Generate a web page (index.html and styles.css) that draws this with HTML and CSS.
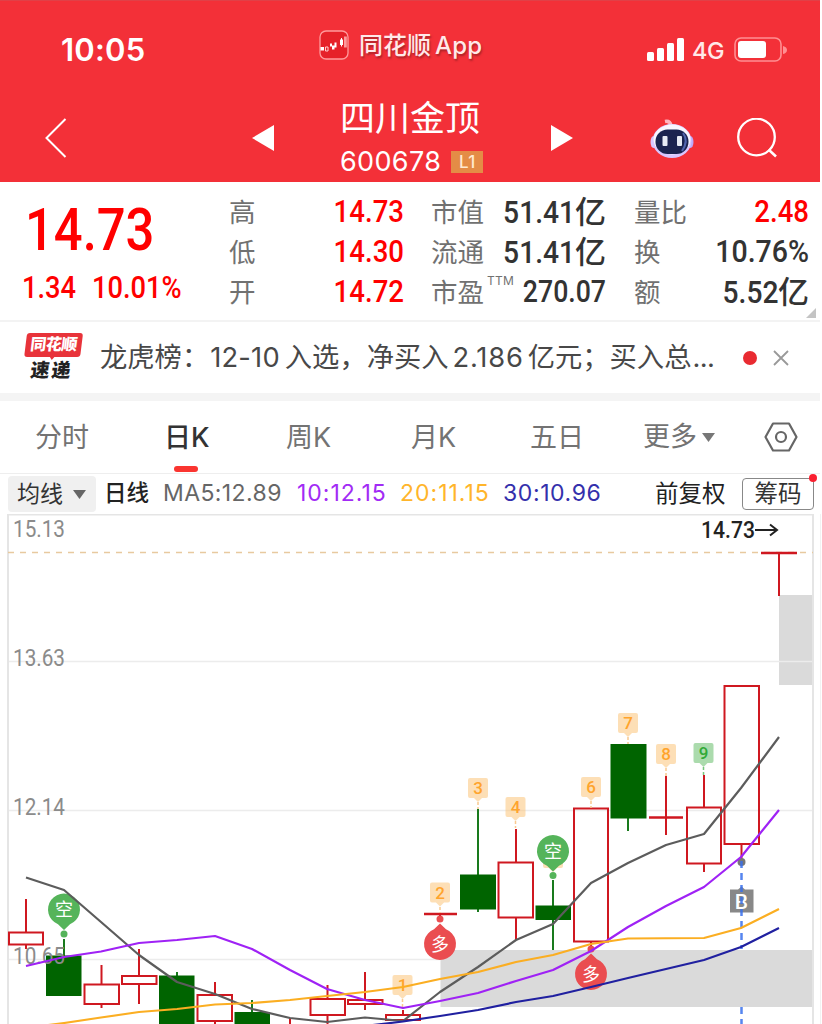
FILE: index.html
```html
<!DOCTYPE html>
<html lang="zh-CN">
<head>
<meta charset="utf-8">
<title>四川金顶 600678</title>
<link rel="stylesheet" href="styles.css">
</head>
<body>
<main class="screen">
  <header class="header">
    <div class="status">
      <span class="clock">10:05</span>
      <div class="brand">
        <svg class="brand-icon" viewBox="0 0 30 30"><rect x="1" y="1" width="28" height="28" rx="6" fill="#e62129" stroke="#ff9a9c" stroke-width="1.3"/><path d="M1.500 17h3.500v3.500H1.500zM11 13.500h2v3h-2zM13 15.500h2.500v4H13zM15.500 12.500h2v5h-2zM21 9.500h3v5.500h-3z" fill="#fff"/><path d="M6.500 17h2.500v4H6.500z" fill="none" stroke="#ffd0d0"/><path d="M25 6.500h2.800v11H25z" fill="#ff9a9c"/><path d="M22.500 8v8.500" stroke="#fff"/></svg>
        <span>同花顺<i class="brand-latin">App</i></span>
      </div>
      <div class="phone">
        <svg class="signal" viewBox="0 0 38 24"><g fill="#fff"><rect x="0" y="14" width="7" height="9" rx="1.5"/><rect x="10" y="10" width="7" height="13" rx="1.5"/><rect x="20" y="5" width="7" height="18" rx="1.5"/><rect x="30" y="0" width="7" height="23" rx="1.5"/></g></svg>
        <span class="net">4G</span>
        <svg class="battery" viewBox="0 0 54 26"><rect x="1" y="1" width="46" height="23" rx="6" fill="none" stroke="#ff8f92" stroke-width="1.6"/><rect x="4" y="4" width="28" height="17" rx="3" fill="#fff"/><path d="M49 9q4 1 4 4t-4 4z" fill="#ff8f92"/></svg>
      </div>
    </div>
    <nav class="nav">
      <svg class="back" viewBox="0 0 22 40"><path d="M20.500 1L1.500 20l19 19" fill="none" stroke="#fff" stroke-width="2"/></svg>
      <svg class="prev" viewBox="0 0 22 26"><path d="M22 0v26L0 13z" fill="#fff"/></svg>
      <div class="title">
        <h1 class="name">四川金顶</h1>
        <div class="code"><span>600678</span><b class="level">L1</b></div>
      </div>
      <svg class="next" viewBox="0 0 22 26"><path d="M0 0v26l22-13z" fill="#fff"/></svg>
      <svg class="robot" viewBox="0 0 44 42"><path d="M15 2.500q5-1 6 4" fill="none" stroke="#ffb4c0" stroke-width="3.500"/><ellipse cx="3.500" cy="23" rx="3" ry="6" fill="#d6c8ff"/><ellipse cx="40.500" cy="23" rx="3" ry="6" fill="#bda9fa"/><ellipse cx="22" cy="22" rx="19.500" ry="17" fill="#d9c6ff"/><ellipse cx="22" cy="20.500" rx="18.500" ry="15" fill="#f8f6ff"/><rect x="5.500" y="10.500" width="33" height="24.500" rx="12" fill="#1b2450"/><path d="M33 14q6 8-1 18" stroke="#5165ad" stroke-width="2" fill="none"/><rect x="12.500" y="17" width="5" height="10" rx="1" fill="#e7ecf5"/><rect x="27" y="17" width="5" height="10" rx="1" fill="#e7ecf5"/></svg>
      <svg class="search" viewBox="0 0 42 42"><circle cx="19.500" cy="19" r="18.300" fill="none" stroke="#fff" stroke-width="2.300"/><path d="M31.500 31.500l7.500 7" stroke="#fff" stroke-width="2.500"/></svg>
    </nav>
  </header>

  <section class="quote">
    <div class="price">
      <div class="last num">14.73</div>
      <div class="change"><span class="num">1.34</span><span class="num">10.01%</span></div>
    </div>
    <dl class="stats">
      <dt>高</dt><dd class="up num">14.73</dd>
      <dt>市值</dt><dd><span class="num cap">51.41</span><span class="unit">亿</span></dd>
      <dt>量比</dt><dd class="up num">2.48</dd>
      <dt>低</dt><dd class="up num">14.30</dd>
      <dt>流通</dt><dd><span class="num cap">51.41</span><span class="unit">亿</span></dd>
      <dt>换</dt><dd class="num turnover">10.76%</dd>
      <dt>开</dt><dd class="up num">14.72</dd>
      <dt class="pe">市盈<sup>TTM</sup></dt><dd class="num ratio">270.07</dd>
      <dt>额</dt><dd><span class="num cap">5.52</span><span class="unit">亿</span></dd>
    </dl>
    <svg class="corner" viewBox="0 0 10 10"><path d="M10 0v10H0z" fill="#c4c4c4"/></svg>
  </section>

  <section class="news">
    <div class="express"><span class="express-top">同花顺</span><span class="express-bottom">速递</span></div>
    <p class="headline">龙虎榜：<i class="date">12-10</i>入选，净买入<i class="amount">2.186</i>亿元；买入总<em>...</em></p>
    <span class="unread"></span>
    <svg class="close" viewBox="0 0 16 16"><path d="M1 1l14 14M15 1L1 15" stroke="#999" stroke-width="1.800"/></svg>
  </section>

  <nav class="tabs">
    <span>分时</span>
    <span class="active">日<i>K</i></span>
    <span>周<i>K</i></span>
    <span>月<i>K</i></span>
    <span>五日</span>
    <span class="more">更多<svg class="caret" viewBox="0 0 13 9"><path d="M0 0h13L6.500 9z" fill="#777"/></svg></span>
    <svg class="settings" viewBox="0 0 34 30"><path d="M9 1.500h16L32.500 15 25 28.500H9L1.500 15z" fill="none" stroke="#666" stroke-width="2.200" stroke-linejoin="round"/><circle cx="17" cy="15" r="5" fill="none" stroke="#666" stroke-width="2.200"/></svg>
  </nav>

  <div class="averages">
    <button class="picker">均线<svg class="caret" viewBox="0 0 13 9"><path d="M0 0h13L6.500 9z" fill="#666"/></svg></button>
    <span class="period">日线</span>
    <span class="ma ma5">MA5:12.89</span>
    <span class="ma ma10">10:12.15</span>
    <span class="ma ma20">20:11.15</span>
    <span class="ma ma30">30:10.96</span>
    <span class="adjust">前复权</span>
    <button class="chips">筹码</button>
  </div>

  <svg class="chart" viewBox="0 514 822 510">
    <defs>
      <path id="tag" d="M-8 0H8Q10 0 10 2V18Q10 20 8 20H4L0 24L-4 20H-8Q-10 20-10 18V2Q-10 0-8 0Z"/>
      <path id="pin" d="M-6 14.800A16 16 0 1 1 6 14.800L0 20.500Z"/>
    </defs>
    <g fill="#dadada"><path d="M440.500 950H813v57H440.500zM779 595h34v90h-34z"/></g>
    <path d="M8 661.500H813M8 810.500H813M8 959.500H440" stroke="#ececec" stroke-width="1.500"/>
    <path d="M8 1024V514.500H813V1024" fill="none" stroke="#e5e5e5" stroke-width="2"/>
    <path d="M820.500 514V1024" stroke="#f2f2f2"/>
    <path d="M8 552.500H813" stroke="#e8c99f" stroke-width="1.500" stroke-dasharray="6 6"/>

    <g fill="none" stroke="#cf1820" stroke-width="2">
      <path d="M26 899v33M26 945v4M101.500 965v19M101.500 1005v3M139 949v27M139 985v19M215 982v13M215 1021v4M290 1018v8M327.500 985v14M327.500 1016v9M365 972v27M365 1004v6M403 1010v5M440 914v4M516 829v33M516 918v22M591 942v6M666 776v59M704 775v32M704 864v8M741.500 844v16M779 553v43"/>
      <path d="M9 932.500H43V944.500H9zM84.500 984.500H119V1004H84.500zM122 976H156.500V984H122zM197.500 995H232V1021H197.500zM310.500 999H345V1015H310.500zM348 1000H382.500V1004H348zM386 1015H420V1020H386zM498.500 862.500H533V917.500H498.500zM574 808.500H608V941.500H574zM687 807.500H721V863.500H687zM724.500 686H759V844H724.500z"/>
      <path d="M424 914H457M649 817.500H683M761 553H797" stroke-width="2.500"/>
    </g>
    <path d="M64 939V956M177 972V976M252 1000V1013M478 809V912M553 880V950M628 744V831" stroke="#197a1d" stroke-width="2"/>
    <path d="M46 955.500H81.500V996H46zM159 975.500H194.500V1026H159zM234.500 1012H270V1026H234.500zM460 874.500H496V909.500H460zM535.500 905.500H571V920H535.500zM610.500 744H646.500V818.500H610.500z" fill="#006400"/>

    <circle cx="741.500" cy="862" r="4" fill="#777"/>
    <path d="M738 889.500l3.500-3 3.500 3h8.500v23H730v-23z" fill="#888"/>
    <text x="741.500" y="909" class="buy">B</text>
    <path d="M741.500 861V949M741.500 1007V1024" stroke="#3970ed" stroke-width="2.500" stroke-dasharray="7 5" opacity=".85"/>

    <g class="axis">
      <text x="13" y="537" textLength="52" lengthAdjust="spacingAndGlyphs">15.13</text>
      <text x="13" y="666" textLength="52" lengthAdjust="spacingAndGlyphs">13.63</text>
      <text x="13" y="815" textLength="52" lengthAdjust="spacingAndGlyphs">12.14</text>
      <text x="13" y="964" textLength="52" lengthAdjust="spacingAndGlyphs">10.65</text>
    </g>
    <text x="701" y="538" class="peak" textLength="54" lengthAdjust="spacingAndGlyphs">14.73</text>
    <path d="M755 530H776M770 524.500L777 530L770 535.500" fill="none" stroke="#222" stroke-width="2"/>

    <g fill="#fcc47a" fill-opacity=".55">
      <use href="#tag" x="402.500" y="975"/><use href="#tag" x="440" y="882.500"/><use href="#tag" x="478" y="778"/><use href="#tag" x="515.500" y="797"/><use href="#tag" x="553" y="848"/><use href="#tag" x="591" y="777"/><use href="#tag" x="628" y="713"/><use href="#tag" x="666" y="744"/>
      <use href="#tag" x="703.500" y="743" fill="#66be69"/>
    </g>
    <g fill="none" stroke="#f9c98f" stroke-width="1.500" stroke-dasharray="3 2">
      <path d="M402.500 999v10M440 907v6M478 802v7M515.500 821v7M591 801v7M628 737v7M666 768v8"/><path d="M703.500 767v8" stroke="#75c67b"/>
    </g>
    <g class="count"><text x="402.500" y="991">1</text><text x="440" y="898.500">2</text><text x="478" y="794">3</text><text x="515.500" y="813">4</text><text x="591" y="793">6</text><text x="628" y="729">7</text><text x="666" y="760">8</text><text x="703.500" y="759" class="count-nine">9</text></g>

    <g fill="#55b45a"><use href="#pin" x="64" y="909.500"/><circle cx="64" cy="934" r="3.500"/><use href="#pin" x="553" y="851"/><circle cx="553" cy="875.500" r="3.500"/></g>
    <g fill="#ea4d50"><use href="#pin" transform="translate(440 944) rotate(180)"/><circle cx="440" cy="919" r="3.500"/><use href="#pin" transform="translate(591 974) rotate(180)"/><circle cx="591" cy="949" r="3.500"/></g>
    <g class="mark"><text x="64" y="916">空</text><text x="553" y="857.500">空</text><text x="440" y="950.500">多</text><text x="591" y="980.500">多</text></g>

    <g fill="none" stroke-width="2.200" stroke-linejoin="round">
      <path stroke="#5c5c5c" d="M26 877.500L64 890L101 922L139 955L177 982L215 994L252 1009L290 1018L327 1022L365 1017.500L403 1021L440 992L478 967L516 940L553 924L591 883L628 863L666 845L704 834L741 788L779 737"/>
      <path stroke="#9f22f5" d="M26 966L64 957L101 951.500L139 943L177 940L215 936L252 949L290 970L327 989L365 1000L403 1008L440 1001L478 993L516 981L553 970L591 951L628 927L666 906L704 887L741 857L779 810"/>
      <path stroke="#fbae22" d="M26 1028L64 1023L101 1017.500L139 1012L177 1009L215 1004.500L252 1003L290 1000L327 996L365 992L403 987L440 979L478 972L516 962L553 955L591 944L628 938.500L704 938L741 928L779 909"/>
      <path stroke="#2020a0" d="M365 1026L403 1021.500L440 1016L478 1010L516 1002L553 996L591 987L628 978L666 969L704 960L741 947L779 928"/>
    </g>
  </svg>
</main>
</body>
</html>
```
FILE: styles.css
```css
* { box-sizing: border-box; }
body { margin: 0; background: #fff; overflow: hidden; font-family: Inter, "Noto Sans CJK SC", sans-serif; color: #333; }
i, em { font-style: normal; }
svg { display: block; flex: none; }
button { font: inherit; color: inherit; margin: 0; }
.screen { width: 822px; height: 1024px; overflow: hidden; }

.header { width: 820px; height: 182px; background: #f33038; color: #fff; border-top: 1px solid #e14047; }
.status { display: flex; height: 91px; }
.clock { width: 258px; padding: 30px 0 0 61px; font-size: 31px; line-height: 38px; font-weight: 600; letter-spacing: .2px; }
.brand { display: flex; width: 328px; padding: 27px 0 0 61px; gap: 10px; font-size: 24px; line-height: 36px; white-space: nowrap; text-shadow: 1px 2px 2px #7a1a1e99; color: #ffe9e9; font-weight: 500; }
.brand-icon { width: 30px; height: 30px; margin-top: 2px; }
.brand-latin { margin-left: 4px; letter-spacing: .2px; }
.phone { display: flex; padding: 37px 0 0 61px; }
.signal { width: 38px; height: 24px; }
.net { width: 41px; margin-left: 7px; font-size: 23.5px; line-height: 25px; color: #ffe9e9; font-weight: 500; letter-spacing: -.5px; }
.battery { width: 54px; height: 26px; margin-top: -1px; margin-left: 1px; }
.nav { display: flex; height: 90px; padding-left: 45px; }
.back { width: 22px; height: 40px; margin-top: 26px; }
.prev { width: 22px; height: 26px; margin: 33px 0 0 185px; }
.title { width: 211px; margin-left: 66px; }
.name { margin: 4px 0 0; font-size: 35px; line-height: 44px; font-weight: 400; white-space: nowrap; }
.code { display: flex; gap: 10px; align-items: center; margin-top: 5px; font-size: 27px; line-height: 34px; letter-spacing: .35px; }
.level { width: 32px; height: 22px; background: #e48c46; font-size: 17px; line-height: 22px; text-align: center; font-weight: 500; color: #ffe9d0; }
.next { width: 22px; height: 26px; margin-top: 33px; }
.robot { width: 44px; height: 42px; margin: 27px 0 0 77px; }
.search { width: 42px; height: 42px; margin: 26px 0 0 43px; }

.quote { display: flex; position: relative; width: 820px; height: 140px; border-bottom: 2px solid #f3f3f3; }
.num { font-family: Roboto, sans-serif; font-weight: 500; font-size: 31px; display: inline-block; transform: scaleX(.89); transform-origin: right; }
.price { width: 229px; color: #f00; white-space: nowrap; }
.last { margin: 11px 0 0 25px; font-size: 59px; line-height: 74px; transform: scaleX(.86); transform-origin: left; display: block; }
.change { display: flex; gap: 9px; padding-left: 22px; line-height: 41px; }
.change .num { transform: scaleX(.88); transform-origin: left; font-size: 31px; }
.stats { display: grid; grid-template-columns: 53px 149px 54px 149px 54px 121px; grid-auto-rows: 40px; margin: 10px 0 0; line-height: 40px; white-space: nowrap; }
.stats dt { font-size: 26.5px; color: #717171; font-weight: 400; }
.stats dd { margin: 0; text-align: right; color: #333; }
.stats dd:nth-of-type(3n+1) { padding-right: 27px; transform-origin: 122px center; }
.stats dd:nth-of-type(3n+2) { padding-right: 28px; transform-origin: 121px center; }
.stats .up { color: #f00; }
.stats .ratio { transform: scaleX(.86); }
.stats .turnover { transform: scaleX(.92); }
.cap { transform: scaleX(.91); }
.unit { font-size: 31px; font-weight: 500; }
.pe { display: flex; }
.pe sup { margin: -3px 0 0 3px; font-size: 12px; line-height: 24px; letter-spacing: .3px; align-self: flex-start; }
.corner { position: absolute; width: 10px; height: 10px; right: 4px; bottom: 2px; }

.news { display: flex; align-items: center; width: 820px; height: 71px; padding-left: 24px; }
.express { width: 58px; height: 50px; margin-right: 18px; font-weight: 900; transform: skewX(-7deg); text-align: center; white-space: nowrap; }
.express-top { display: block; width: 56px; height: 24px; background: #e8333a; border-radius: 3px; color: #fff; font-size: 16px; line-height: 23px; letter-spacing: -.5px; }
.express-top::after { content: ""; display: block; width: 6px; height: 4px; margin: 0 auto; background: #e8333a; clip-path: polygon(0 0, 100% 0, 50% 100%); }
.express-bottom { display: block; margin-top: 1px; font-size: 19px; line-height: 25px; color: #222; letter-spacing: 2px; }
.headline { width: 643px; margin: 0; padding-top: 1px; font-size: 27.3px; line-height: 40px; color: #484848; white-space: nowrap; font-weight: 400; }
.date { margin: 0 5px 0 1px; letter-spacing: .2px; }
.amount { margin: 0 4px 0 4px; letter-spacing: .8px; }
.headline em { letter-spacing: -.6px; margin-left: 1px; }
.unread { width: 14px; height: 14px; border-radius: 50%; background: #e92b31; }
.close { width: 16px; height: 16px; margin-left: 16px; }

.tabs { display: grid; grid-template-columns: 130px 121px 125px 119px 113px 121px 34px; align-items: center; width: 820px; height: 81px; padding: 0 0 0 35px; border-top: 8px solid #f4f4f4; border-bottom: 1px solid #eee; font-size: 27px; font-weight: 400; color: #737373; white-space: nowrap; }
.tabs span { line-height: 74px; height: 72px; }
.tabs i { font-size: 27px; font-weight: 400; }
.tabs .active { color: #333; font-weight: 500; margin-left: -1px; }
.tabs .active i { font-weight: 500; }
.active::after { content: ""; display: block; width: 24px; height: 6px; margin: -9px 0 0 10px; background: #fa3530; border-radius: 3px; }
.more { display: flex; align-items: center; gap: 5px; }
.caret { width: 13px; height: 9px; }
.settings { width: 34px; height: 30px; }

.averages { display: flex; align-items: center; width: 822px; height: 40px; padding: 0 0 0 8px; white-space: nowrap; }
.picker { display: flex; align-items: center; gap: 10px; width: 88px; height: 36px; padding: 0 9px; border: 0; border-radius: 4px; background: #f0f0f0; font-size: 23px; line-height: 32px; }
.period { width: 67px; padding-left: 8px; font-size: 22.5px; line-height: 34px; margin-top: -2px; color: #222; font-weight: 500; }
.ma { font-size: 23px; margin-top: -2px; }
.ma5 { width: 134px; color: #666; letter-spacing: .4px; }
.ma10 { width: 103px; color: #a22bf5; letter-spacing: 1px; }
.ma20 { width: 103px; color: #ffb52b; letter-spacing: 1px; }
.ma30 { width: 152px; color: #3430ac; letter-spacing: .6px; }
.adjust { width: 87px; margin-top: -4px; font-size: 23.5px; color: #222; }
.chips { position: relative; width: 72px; height: 32px; margin-top: -1px; padding: 0; border: 1.5px solid #888; border-radius: 4px; background: #fff; font-size: 23.5px; line-height: 28px; }
.chips::after { content: ""; position: absolute; width: 8px; height: 8px; right: -4px; top: -5px; border-radius: 50%; background: #fa2030; }

.chart { width: 822px; height: 510px; }
.chart text { font-family: Roboto, "Noto Sans CJK SC", sans-serif; }
.axis { font-size: 23.5px; fill: #8b8b8b; }
.peak { font-size: 23.5px; font-weight: 500; fill: #222; }
.count { font-size: 17px; font-weight: 500; fill: #ffa42c; text-anchor: middle; }
.count-nine { fill: #32aa37; }
.mark { font-size: 18px; fill: #fff; text-anchor: middle; }
.buy { font-size: 21px; font-weight: 500; fill: #fff; text-anchor: middle; }
```
